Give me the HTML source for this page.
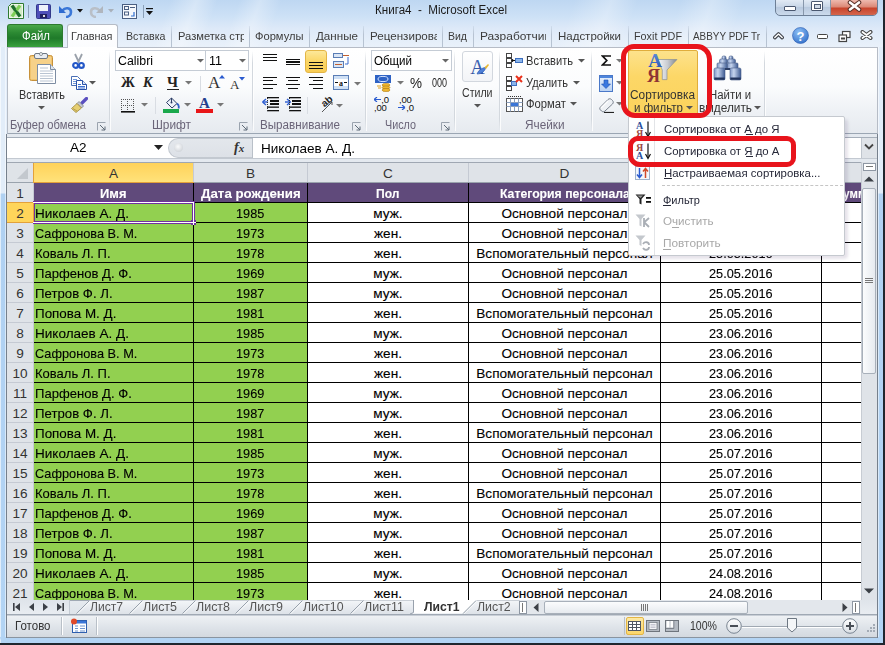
<!DOCTYPE html><html><head><meta charset="utf-8"><style>
*{margin:0;padding:0;box-sizing:border-box}
html,body{width:885px;height:645px;overflow:hidden}
body{position:relative;font-family:"Liberation Sans", sans-serif;background:#c9daee;}
.a{position:absolute}
.t{position:absolute;white-space:nowrap}
.cell{position:absolute;font-size:13.6px;line-height:19px;white-space:nowrap;overflow:hidden;color:#000;-webkit-text-stroke:0.12px currentColor}
</style></head><body>
<div class="a" style="left:0px;top:0px;width:885px;height:47px;background:linear-gradient(180deg,#bed7f2 0%,#cde1f6 35%,#dde9f8 60%,#e9f1fa 100%)"></div><div class="a" style="left:0px;top:0px;width:885px;height:47px;background:linear-gradient(110deg,rgba(255,255,255,0) 0px,rgba(255,255,255,0) 160px,rgba(255,255,255,0.35) 185px,rgba(255,255,255,0) 205px,rgba(255,255,255,0) 225px,rgba(255,255,255,0.3) 245px,rgba(255,255,255,0) 265px,rgba(255,255,255,0) 540px,rgba(255,255,255,0.3) 575px,rgba(255,255,255,0) 600px,rgba(255,255,255,0) 640px,rgba(255,255,255,0.3) 670px,rgba(255,255,255,0) 700px)"></div><div class="a" style="left:0px;top:47px;width:7px;height:598px;background:linear-gradient(180deg,#e2edf9 0px,#e2edf9 146px,#b0d1f2 147px,#b3d4f4 100%)"></div><div class="a" style="left:0px;top:47px;width:1px;height:598px;background:rgba(255,255,255,0.6)"></div><div class="a" style="left:5px;top:47px;width:1px;height:598px;background:rgba(255,255,255,0.5)"></div><div class="a" style="left:877px;top:47px;width:6px;height:598px;background:linear-gradient(180deg,#e2edf9 0px,#e2edf9 146px,#b0d1f2 147px,#b3d4f4 100%)"></div><div class="a" style="left:878px;top:47px;width:1px;height:598px;background:rgba(255,255,255,0.5)"></div><div class="a" style="left:883px;top:0px;width:2px;height:645px;background:#20262e"></div><div class="a" style="left:0px;top:637px;width:883px;height:6px;background:#b3d4f4;border-radius:0 0 6px 6px"></div><div class="a" style="left:0px;top:643px;width:885px;height:2px;background:#20262e"></div><div class="t" style="left:375px;top:0.0px;font-size:12px;line-height:20px;color:#1b1b1b;transform:scaleX(0.967);transform-origin:0 0;">Книга4  -  Microsoft Excel</div><div class="a" style="left:775px;top:-3px;width:103px;height:19px;border:1px solid #6d7f96;border-radius:0 0 5px 5px;overflow:hidden;background:linear-gradient(#e9f0f8,#c9d7e8 50%,#b7c8dd 51%,#cbdaec)"></div><div class="a" style="left:803px;top:0px;width:1px;height:15px;background:#8797ab"></div><div class="a" style="left:830px;top:0px;width:1px;height:15px;background:#8797ab"></div><div class="a" style="left:831px;top:0px;width:46px;height:15px;border-radius:0 0 4px 0;background:linear-gradient(#eeb9ae,#dc8a78 45%,#c8442c 55%,#d4664c)"></div><div class="a" style="left:784px;top:6px;width:12px;height:5px;background:#fff;border:1px solid #4a5870;border-radius:1px"></div><div class="a" style="left:811px;top:1px;width:12px;height:10px;background:#fff;border:1px solid #4a5870;border-radius:1px"></div><div class="a" style="left:813.5px;top:3.5px;width:7px;height:5px;background:#cfd9e6;border:1px solid #4a5870"></div><svg class="a" style="left:847px;top:0px;" width="15" height="12" viewBox="0 0 15 12"><path d="M3 2.5 L12 9.5 M12 2.5 L3 9.5" stroke="#5a3028" stroke-width="4.6" stroke-linecap="round"/><path d="M3 2.5 L12 9.5 M12 2.5 L3 9.5" stroke="#fff" stroke-width="2.6" stroke-linecap="round"/></svg><svg class="a" style="left:8px;top:3px;" width="17" height="17" viewBox="0 0 17 17"><path d="M3.5 0.5 L15.5 0.5 L15.5 15.5 L0.5 15.5 L0.5 3.5 Z" fill="#f2f8ee" stroke="#2f7a32"/><rect x="2" y="2" width="12" height="12" fill="#d3ebc6"/><path d="M4 2.5 L12 13.5" stroke="#1e6f2c" stroke-width="3.2"/><path d="M12 2.5 L4 13.5" stroke="#7fcf57" stroke-width="3"/><path d="M6 6 L10 10.5" stroke="#1e6f2c" stroke-width="2"/></svg><div class="a" style="left:28px;top:5px;width:1px;height:13px;background:#8aa0b8"></div><svg class="a" style="left:36px;top:4px;" width="15" height="15" viewBox="0 0 15 15"><rect x="0.5" y="0.5" width="14" height="14" rx="1" fill="#4e4fb8" stroke="#333a8a"/><rect x="3" y="1" width="9" height="6" fill="#eef2fa"/><rect x="4" y="10" width="7" height="4" fill="#202060"/><rect x="7" y="11" width="2" height="2" fill="#ddd"/></svg><svg class="a" style="left:58px;top:4px;" width="15" height="14" viewBox="0 0 15 14"><path d="M4.5 6.5 C7 3 13 3.5 13 8 C13 11 10.5 13 8 13" fill="none" stroke="#3b78d8" stroke-width="2.6"/><path d="M1 2 L1 9 L8 9 Z" fill="#2f6cd0"/></svg><svg class="a" style="left:77px;top:9px;" width="6" height="4" viewBox="0 0 6 4"><path d="M0 0 L6 0 L3 3.5 Z" fill="#111"/></svg><svg class="a" style="left:89px;top:4px;" width="15" height="14" viewBox="0 0 15 14"><path d="M10.5 6.5 C8 3 2 3.5 2 8 C2 11 4.5 13 7 13" fill="none" stroke="#b9bfc7" stroke-width="2.6"/><path d="M14 2 L14 9 L7 9 Z" fill="#b0b6be"/></svg><svg class="a" style="left:108px;top:9px;" width="6" height="4" viewBox="0 0 6 4"><path d="M0 0 L6 0 L3 3.5 Z" fill="#a8b0ba"/></svg><svg class="a" style="left:122px;top:4px;" width="15" height="15" viewBox="0 0 15 15"><rect x="0.5" y="0.5" width="14" height="14" fill="#f5f8fc" stroke="#4a5f82"/><rect x="2.5" y="2.5" width="4" height="3" fill="none" stroke="#4a5f82"/><rect x="8" y="3" width="5" height="1" fill="#4a5f82"/><rect x="2.5" y="8" width="4" height="3" fill="none" stroke="#4a5f82"/><path d="M9 12 L12 12 L12 8" fill="none" stroke="#2f6fd0" stroke-width="1.2"/></svg><div class="a" style="left:143px;top:5px;width:1px;height:13px;background:#8aa0b8"></div><svg class="a" style="left:146px;top:8px;" width="8" height="8" viewBox="0 0 8 8"><rect x="0" y="0" width="7" height="1.2" fill="#111"/><path d="M0 3 L7 3 L3.5 7 Z" fill="#111"/></svg><div class="a" style="left:7px;top:24px;width:56px;height:23px;border-radius:3px 3px 0 0;background:linear-gradient(#4aa84a 0%,#2c8a33 35%,#1f7a2a 60%,#3aa23e 100%);border:1px solid #2d7a2f;border-bottom:none"></div><div class="t" style="left:22px;top:26.0px;font-size:12px;line-height:20px;color:#fff;transform:scaleX(0.949);transform-origin:0 0;">Файл</div><div class="a" style="left:67px;top:24px;width:51px;height:24px;border-radius:3px 3px 0 0;background:linear-gradient(#fff,#fbfcfe);border:1px solid #b6bcc6;border-bottom:none"></div><div class="t" style="left:71px;top:26.0px;font-size:11px;line-height:20px;color:#3c3c3c;transform:scaleX(0.991);transform-origin:0 0;">Главная</div><div class="t" style="left:125.5px;top:26.0px;font-size:11px;line-height:20px;color:#3c3c3c;transform:scaleX(0.966);transform-origin:0 0;">Вставка</div><div class="a" style="left:178px;top:24px;width:66px;height:22px;overflow:hidden"><div class="t" style="left:0px;top:2px;font-size:11px;line-height:20px;color:#3c3c3c;transform:scaleX(1.014);transform-origin:0 0;">Разметка стр</div></div><div class="t" style="left:255px;top:26.0px;font-size:11px;line-height:20px;color:#3c3c3c;transform:scaleX(1.013);transform-origin:0 0;">Формулы</div><div class="t" style="left:316px;top:26.0px;font-size:11px;line-height:20px;color:#3c3c3c;transform:scaleX(1.057);transform-origin:0 0;">Данные</div><div class="a" style="left:370px;top:24px;width:67px;height:22px;overflow:hidden"><div class="t" style="left:0px;top:2px;font-size:11px;line-height:20px;color:#3c3c3c;transform:scaleX(1.056);transform-origin:0 0;">Рецензирова</div></div><div class="t" style="left:448px;top:26.0px;font-size:11px;line-height:20px;color:#3c3c3c;transform:scaleX(0.955);transform-origin:0 0;">Вид</div><div class="a" style="left:480px;top:24px;width:66px;height:22px;overflow:hidden"><div class="t" style="left:0px;top:2px;font-size:11px;line-height:20px;color:#3c3c3c;transform:scaleX(1.087);transform-origin:0 0;">Разработчик</div></div><div class="t" style="left:558px;top:26.0px;font-size:11px;line-height:20px;color:#3c3c3c;transform:scaleX(1.044);transform-origin:0 0;">Надстройки</div><div class="t" style="left:634px;top:26.0px;font-size:11px;line-height:20px;color:#3c3c3c;transform:scaleX(0.982);transform-origin:0 0;">Foxit PDF</div><div class="t" style="left:693px;top:26.0px;font-size:11px;line-height:20px;color:#3c3c3c;transform:scaleX(0.901);transform-origin:0 0;">ABBYY PDF Tr</div><div class="a" style="left:171px;top:26px;width:1px;height:21px;background:linear-gradient(rgba(160,175,195,0.2),#b7c3d2 40%,#b7c3d2)"></div><div class="a" style="left:249px;top:26px;width:1px;height:21px;background:linear-gradient(rgba(160,175,195,0.2),#b7c3d2 40%,#b7c3d2)"></div><div class="a" style="left:309px;top:26px;width:1px;height:21px;background:linear-gradient(rgba(160,175,195,0.2),#b7c3d2 40%,#b7c3d2)"></div><div class="a" style="left:363px;top:26px;width:1px;height:21px;background:linear-gradient(rgba(160,175,195,0.2),#b7c3d2 40%,#b7c3d2)"></div><div class="a" style="left:442px;top:26px;width:1px;height:21px;background:linear-gradient(rgba(160,175,195,0.2),#b7c3d2 40%,#b7c3d2)"></div><div class="a" style="left:473px;top:26px;width:1px;height:21px;background:linear-gradient(rgba(160,175,195,0.2),#b7c3d2 40%,#b7c3d2)"></div><div class="a" style="left:551px;top:26px;width:1px;height:21px;background:linear-gradient(rgba(160,175,195,0.2),#b7c3d2 40%,#b7c3d2)"></div><div class="a" style="left:628px;top:26px;width:1px;height:21px;background:linear-gradient(rgba(160,175,195,0.2),#b7c3d2 40%,#b7c3d2)"></div><div class="a" style="left:688px;top:26px;width:1px;height:21px;background:linear-gradient(rgba(160,175,195,0.2),#b7c3d2 40%,#b7c3d2)"></div><div class="a" style="left:766px;top:26px;width:1px;height:21px;background:linear-gradient(rgba(160,175,195,0.2),#b7c3d2 40%,#b7c3d2)"></div><svg class="a" style="left:773px;top:31px;" width="11" height="9" viewBox="0 0 11 9"><path d="M1.8 6.6 L5.5 3 L9.2 6.6" fill="none" stroke="#3f434a" stroke-width="3.6" stroke-linecap="round" stroke-linejoin="round"/><path d="M1.8 6.6 L5.5 3 L9.2 6.6" fill="none" stroke="#fff" stroke-width="1.4" stroke-linecap="round" stroke-linejoin="round"/></svg><svg class="a" style="left:792px;top:27px;" width="17" height="17" viewBox="0 0 17 17"><defs><radialGradient id="hg" cx="0.4" cy="0.3" r="0.8"><stop offset="0" stop-color="#8ec0f5"/><stop offset="1" stop-color="#2f6cc8"/></radialGradient></defs><circle cx="8.5" cy="8.5" r="8" fill="url(#hg)" stroke="#2a5cb0" stroke-width="0.6"/><text x="8.5" y="13.5" font-family="Liberation Sans" font-weight="bold" font-size="13" fill="#fff" text-anchor="middle">?</text></svg><div class="a" style="left:817px;top:34px;width:11px;height:5px;background:#fff;border:1.2px solid #444;border-radius:1.5px"></div><svg class="a" style="left:838px;top:30px;" width="13" height="13" viewBox="0 0 13 13"><rect x="4.5" y="1.5" width="7.5" height="6" fill="#fff" stroke="#444" stroke-width="1.2"/><rect x="1" y="5" width="7.5" height="6.5" fill="#fff" stroke="#444" stroke-width="1.2"/><rect x="3" y="7.5" width="4" height="2" fill="#444"/></svg><svg class="a" style="left:860px;top:30px;" width="13" height="10" viewBox="0 0 13 10"><path d="M2.5 2 L10.5 8 M10.5 2 L2.5 8" stroke="#444" stroke-width="4" stroke-linecap="round"/><path d="M2.5 2 L10.5 8 M10.5 2 L2.5 8" stroke="#fff" stroke-width="1.8" stroke-linecap="round"/></svg><div class="a" style="left:7px;top:47px;width:871px;height:87px;border:1px solid #b6bcc6;border-bottom:1px solid #9ba6b3;background:linear-gradient(#ffffff 0%,#fbfcfd 45%,#eef1f5 75%,#e6eaef 100%)"></div><div class="a" style="left:68px;top:47px;width:49px;height:1px;background:#fff"></div><div class="a" style="left:109px;top:51px;width:1px;height:80px;background:linear-gradient(rgba(200,206,214,0),#d3d8de 15%,#d3d8de 85%,rgba(200,206,214,0))"></div><div class="a" style="left:110px;top:51px;width:1px;height:80px;background:rgba(255,255,255,0.8)"></div><div class="a" style="left:252px;top:51px;width:1px;height:80px;background:linear-gradient(rgba(200,206,214,0),#d3d8de 15%,#d3d8de 85%,rgba(200,206,214,0))"></div><div class="a" style="left:253px;top:51px;width:1px;height:80px;background:rgba(255,255,255,0.8)"></div><div class="a" style="left:365px;top:51px;width:1px;height:80px;background:linear-gradient(rgba(200,206,214,0),#d3d8de 15%,#d3d8de 85%,rgba(200,206,214,0))"></div><div class="a" style="left:366px;top:51px;width:1px;height:80px;background:rgba(255,255,255,0.8)"></div><div class="a" style="left:454px;top:51px;width:1px;height:80px;background:linear-gradient(rgba(200,206,214,0),#d3d8de 15%,#d3d8de 85%,rgba(200,206,214,0))"></div><div class="a" style="left:455px;top:51px;width:1px;height:80px;background:rgba(255,255,255,0.8)"></div><div class="a" style="left:499px;top:51px;width:1px;height:80px;background:linear-gradient(rgba(200,206,214,0),#d3d8de 15%,#d3d8de 85%,rgba(200,206,214,0))"></div><div class="a" style="left:500px;top:51px;width:1px;height:80px;background:rgba(255,255,255,0.8)"></div><div class="a" style="left:591px;top:51px;width:1px;height:80px;background:linear-gradient(rgba(200,206,214,0),#d3d8de 15%,#d3d8de 85%,rgba(200,206,214,0))"></div><div class="a" style="left:592px;top:51px;width:1px;height:80px;background:rgba(255,255,255,0.8)"></div><div class="a" style="left:764px;top:51px;width:1px;height:80px;background:linear-gradient(rgba(200,206,214,0),#d3d8de 15%,#d3d8de 85%,rgba(200,206,214,0))"></div><div class="a" style="left:765px;top:51px;width:1px;height:80px;background:rgba(255,255,255,0.8)"></div><div class="t" style="left:10.3px;top:115.0px;font-size:12px;line-height:20px;color:#6a6478;transform:scaleX(0.932);transform-origin:0 0;">Буфер обмена</div><div class="t" style="left:152px;top:115.0px;font-size:12px;line-height:20px;color:#6a6478;transform:scaleX(0.988);transform-origin:0 0;">Шрифт</div><div class="t" style="left:260px;top:115.0px;font-size:12px;line-height:20px;color:#6a6478;transform:scaleX(0.969);transform-origin:0 0;">Выравнивание</div><div class="t" style="left:385px;top:115.0px;font-size:12px;line-height:20px;color:#6a6478;transform:scaleX(0.898);transform-origin:0 0;">Число</div><div class="t" style="left:525px;top:115.0px;font-size:12px;line-height:20px;color:#6a6478;transform:scaleX(0.981);transform-origin:0 0;">Ячейки</div><svg class="a" style="left:97px;top:122px;" width="9" height="9" viewBox="0 0 9 9"><path d="M0.5 0.5 L8.5 0.5 M0.5 0.5 L0.5 8.5" stroke="#9aa3ae"/><path d="M3 3 L8 8 M8 4.5 L8 8 L4.5 8" stroke="#5f6b78" fill="none"/></svg><svg class="a" style="left:239px;top:122px;" width="9" height="9" viewBox="0 0 9 9"><path d="M0.5 0.5 L8.5 0.5 M0.5 0.5 L0.5 8.5" stroke="#9aa3ae"/><path d="M3 3 L8 8 M8 4.5 L8 8 L4.5 8" stroke="#5f6b78" fill="none"/></svg><svg class="a" style="left:352px;top:122px;" width="9" height="9" viewBox="0 0 9 9"><path d="M0.5 0.5 L8.5 0.5 M0.5 0.5 L0.5 8.5" stroke="#9aa3ae"/><path d="M3 3 L8 8 M8 4.5 L8 8 L4.5 8" stroke="#5f6b78" fill="none"/></svg><svg class="a" style="left:441px;top:122px;" width="9" height="9" viewBox="0 0 9 9"><path d="M0.5 0.5 L8.5 0.5 M0.5 0.5 L0.5 8.5" stroke="#9aa3ae"/><path d="M3 3 L8 8 M8 4.5 L8 8 L4.5 8" stroke="#5f6b78" fill="none"/></svg><div class="a" style="left:7px;top:134px;width:871px;height:28px;background:#e4e9ef"></div><div class="a" style="left:7px;top:137px;width:871px;height:22px;background:#fff;border-top:1px solid #a5aeb9;border-bottom:1px solid #c3c9d1"></div><div class="a" style="left:168px;top:138px;width:85px;height:20px;border-radius:10px 0 0 10px;border:1px solid #c3c9d0;border-right:none;background:linear-gradient(#e3e7ec,#dde1e7)"></div><div class="a" style="left:173.5px;top:143px;width:9px;height:9px;border-radius:5px;background:radial-gradient(circle at 45% 40%,#fafbfc,#c3c8cf)"></div><div class="a" style="left:252px;top:138px;width:1px;height:20px;background:#b9c0c8"></div><div class="a" style="left:861px;top:138px;width:16px;height:20px;background:#dfe3e8;border-left:1px solid #c0c6ce"></div><svg class="a" style="left:864px;top:143px;" width="10" height="8" viewBox="0 0 10 8"><path d="M1 1.5 L5 5.5 L9 1.5" fill="none" stroke="#444" stroke-width="1.8"/></svg><div class="t" style="left:70px;top:138.0px;font-size:13.6px;line-height:20px;color:#000;transform:scaleX(0.992);transform-origin:0 0;">A2</div><svg class="a" style="left:154px;top:145px;" width="9" height="6" viewBox="0 0 9 6"><path d="M0 0 L9 0 L4.5 5 Z" fill="#222"/></svg><div class="t" style="left:234px;top:138px;font-family:'Liberation Serif',serif;font-style:italic;font-weight:bold;font-size:14px;line-height:20px;color:#333">f<span style="font-size:11px">x</span></div><div class="t" style="left:261px;top:138.7px;font-size:13.6px;line-height:20px;color:#000;transform:scaleX(0.995);transform-origin:0 0;">Николаев А. Д.</div><svg class="a" style="left:28px;top:52px;" width="29" height="33" viewBox="0 0 29 33"><rect x="1.5" y="3.5" width="23" height="25" rx="2" fill="#f0c36e" stroke="#c7913a"/><rect x="3" y="5" width="20" height="22" fill="#f6d189"/><rect x="6.5" y="1.5" width="13" height="5" rx="1.5" fill="#e9edf2" stroke="#6f7884"/><circle cx="13" cy="2" r="1.5" fill="#fff" stroke="#6f7884" stroke-width="0.8"/><path d="M9.5 12.5 L22.5 12.5 L27.5 17.5 L27.5 31.5 L9.5 31.5 Z" fill="#fff" stroke="#7d8da3"/><path d="M22.5 12.5 L22.5 17.5 L27.5 17.5" fill="#dde4ec" stroke="#7d8da3"/><path d="M12 16h8M12 19h13M12 21.5h13M12 24h13M12 26.5h13M12 29h13" stroke="#b9c4d2" stroke-width="1"/></svg><div class="t" style="left:18.7px;top:85.0px;font-size:12px;line-height:20px;color:#333;transform:scaleX(0.904);transform-origin:0 0;">Вставить</div><svg class="a" style="left:38px;top:106px;" width="7" height="4" viewBox="0 0 7 4"><path d="M0 0 L7 0 L3.5 3.5 Z" fill="#555"/></svg><svg class="a" style="left:72px;top:53px;" width="13" height="16" viewBox="0 0 13 16"><path d="M3 1 L7 9.5 M10 1 L6 9.5" stroke="#9aa1aa" stroke-width="1.8"/><circle cx="3.6" cy="12.4" r="2.4" fill="#fff" stroke="#2458c8" stroke-width="2.2"/><circle cx="9.4" cy="12.4" r="2.4" fill="#fff" stroke="#2458c8" stroke-width="2.2"/></svg><svg class="a" style="left:70px;top:75px;" width="18" height="16" viewBox="0 0 18 16"><path d="M1.5 1.5 L7.5 1.5 L10.5 4.5 L10.5 10.5 L1.5 10.5 Z" fill="#fff" stroke="#4a6fb5"/><path d="M3 4.5h4M3 6.5h6M3 8.5h6" stroke="#6d95d8"/><path d="M6.5 5.5 L12.5 5.5 L16.5 9.5 L16.5 14.5 L6.5 14.5 Z" fill="#fff" stroke="#2a52a8"/><path d="M12.5 5.5 L12.5 9.5 L16.5 9.5" fill="#dbe6f6" stroke="#2a52a8"/><path d="M8 9.5h3M8 11.5h7M8 13h7" stroke="#3c6fd0"/></svg><svg class="a" style="left:89px;top:81px;" width="7" height="4" viewBox="0 0 7 4"><path d="M0 0 L7 0 L3.5 3.5 Z" fill="#555"/></svg><svg class="a" style="left:70px;top:97px;" width="18" height="16" viewBox="0 0 18 16"><path d="M12 6 L16.5 1.5" stroke="#5a4fc0" stroke-width="3.2" stroke-linecap="round"/><path d="M9 4.5 L13.5 9 L11.5 11 L7 6.5 Z" fill="#c3c7cf" stroke="#7d838c" stroke-width="0.8"/><path d="M7 6.5 L11.5 11 L6 15.5 L1.5 11.5 Z" fill="#e6cf73" stroke="#9d8635" stroke-width="0.8"/><path d="M3 11.5 L7 14" stroke="#b9a047"/></svg><div class="a" style="left:115px;top:50px;width:91px;height:21px;border:1px solid #c5ccd5;background:#fff"></div><div class="a" style="left:205px;top:50px;width:44px;height:21px;border:1px solid #c5ccd5;background:#fff"></div><div class="t" style="left:118px;top:51.0px;font-size:12px;line-height:20px;color:#000;transform:scaleX(1.029);transform-origin:0 0;">Calibri</div><svg class="a" style="left:197px;top:59px;" width="7" height="4" viewBox="0 0 7 4"><path d="M0 0 L7 0 L3.5 3.5 Z" fill="#666"/></svg><div class="t" style="left:208.5px;top:51.0px;font-size:12px;line-height:20px;color:#000;transform:scaleX(1.044);transform-origin:0 0;">11</div><svg class="a" style="left:239px;top:59px;" width="7" height="4" viewBox="0 0 7 4"><path d="M0 0 L7 0 L3.5 3.5 Z" fill="#666"/></svg><div class="t" style="left:121px;top:73px;font-family:'Liberation Serif',serif;font-weight:bold;font-size:14px;line-height:20px;color:#222">Ж</div><div class="t" style="left:143px;top:73px;font-family:'Liberation Serif',serif;font-weight:bold;font-style:italic;font-size:14px;line-height:20px;color:#222">К</div><div class="t" style="left:167px;top:72px;font-family:'Liberation Serif',serif;font-weight:bold;font-size:15px;line-height:20px;color:#222">Ч</div><div class="a" style="left:167px;top:89px;width:12px;height:1px;background:#222"></div><svg class="a" style="left:185px;top:81px;" width="7" height="4" viewBox="0 0 7 4"><path d="M0 0 L7 0 L3.5 3.5 Z" fill="#777"/></svg><div class="a" style="left:200px;top:76px;width:1px;height:16px;background:#d9dde3"></div><div class="t" style="left:208px;top:73px;font-family:'Liberation Serif',serif;font-size:17px;line-height:20px;color:#333">A</div><svg class="a" style="left:219px;top:75px;" width="6" height="4" viewBox="0 0 6 4"><path d="M0 3.5 L3 0 L6 3.5 Z" fill="#2a5bd0"/></svg><div class="t" style="left:230px;top:76px;font-family:'Liberation Serif',serif;font-size:13px;line-height:18px;color:#333">A</div><svg class="a" style="left:239px;top:77px;" width="6" height="4" viewBox="0 0 6 4"><path d="M0 0 L6 0 L3 3.5 Z" fill="#2a5bd0"/></svg><svg class="a" style="left:121px;top:99px;" width="14" height="14" viewBox="0 0 14 14"><g fill="#555"><rect x="0" y="0" width="1" height="1"/><rect x="2" y="0" width="1" height="1"/><rect x="4" y="0" width="1" height="1"/><rect x="6" y="0" width="1" height="1"/><rect x="8" y="0" width="1" height="1"/><rect x="10" y="0" width="1" height="1"/><rect x="12" y="0" width="1" height="1"/><rect x="0" y="6" width="1" height="1"/><rect x="2" y="6" width="1" height="1"/><rect x="4" y="6" width="1" height="1"/><rect x="6" y="6" width="1" height="1"/><rect x="8" y="6" width="1" height="1"/><rect x="10" y="6" width="1" height="1"/><rect x="12" y="6" width="1" height="1"/><rect x="0" y="12" width="1" height="1"/><rect x="2" y="12" width="1" height="1"/><rect x="4" y="12" width="1" height="1"/><rect x="6" y="12" width="1" height="1"/><rect x="8" y="12" width="1" height="1"/><rect x="10" y="12" width="1" height="1"/><rect x="12" y="12" width="1" height="1"/><rect x="0" y="0" width="1" height="1"/><rect x="0" y="2" width="1" height="1"/><rect x="0" y="4" width="1" height="1"/><rect x="0" y="6" width="1" height="1"/><rect x="0" y="8" width="1" height="1"/><rect x="0" y="10" width="1" height="1"/><rect x="6" y="0" width="1" height="1"/><rect x="6" y="2" width="1" height="1"/><rect x="6" y="4" width="1" height="1"/><rect x="6" y="6" width="1" height="1"/><rect x="6" y="8" width="1" height="1"/><rect x="6" y="10" width="1" height="1"/><rect x="12" y="0" width="1" height="1"/><rect x="12" y="2" width="1" height="1"/><rect x="12" y="4" width="1" height="1"/><rect x="12" y="6" width="1" height="1"/><rect x="12" y="8" width="1" height="1"/><rect x="12" y="10" width="1" height="1"/></g><rect x="0" y="12" width="14" height="1.6" fill="#111"/></svg><svg class="a" style="left:141px;top:103px;" width="7" height="4" viewBox="0 0 7 4"><path d="M0 0 L7 0 L3.5 3.5 Z" fill="#777"/></svg><div class="a" style="left:155px;top:97px;width:1px;height:17px;background:#d9dde3"></div><svg class="a" style="left:163px;top:96px;" width="17" height="17" viewBox="0 0 17 17"><path d="M3.5 6.5 L8.5 2 L14 7.5 L9 12 Z" fill="#eef3fb" stroke="#2d3e66" stroke-width="1"/><path d="M8.5 2 L8.5 6" stroke="#2d3e66"/><circle cx="8.5" cy="6.5" r="1" fill="#2d3e66"/><path d="M14 7.5 C16 9 16 11 15.5 12.5" stroke="#2f62c8" stroke-width="1.8" fill="none"/><rect x="0" y="13" width="16" height="4" fill="#1aa84c"/></svg><svg class="a" style="left:184px;top:103px;" width="7" height="4" viewBox="0 0 7 4"><path d="M0 0 L7 0 L3.5 3.5 Z" fill="#777"/></svg><svg class="a" style="left:196px;top:96px;" width="17" height="13" viewBox="0 0 17 13"><text x="8.5" y="11.5" font-family="Liberation Serif" font-weight="bold" font-size="15" fill="#24408e" text-anchor="middle">A</text></svg><div class="a" style="left:196px;top:109px;width:17px;height:4px;background:#e81518"></div><svg class="a" style="left:217px;top:103px;" width="7" height="4" viewBox="0 0 7 4"><path d="M0 0 L7 0 L3.5 3.5 Z" fill="#777"/></svg><div class="a" style="left:305px;top:50px;width:22px;height:23px;border:1px solid #e3b545;border-radius:3px;background:linear-gradient(#fde89a,#fbd665 50%,#f8cc54)"></div><div class="a" style="left:263px;top:54.0px;width:14px;height:1.3px;background:#111"></div><div class="a" style="left:263px;top:56.8px;width:14px;height:1.3px;background:#111"></div><div class="a" style="left:263px;top:59.6px;width:14px;height:1.3px;background:#111"></div><div class="a" style="left:286px;top:58.5px;width:14px;height:1.3px;background:#111"></div><div class="a" style="left:286px;top:61.3px;width:14px;height:1.3px;background:#111"></div><div class="a" style="left:286px;top:64.1px;width:14px;height:1.3px;background:#111"></div><div class="a" style="left:309px;top:62.0px;width:14px;height:1.3px;background:#111"></div><div class="a" style="left:309px;top:64.8px;width:14px;height:1.3px;background:#111"></div><div class="a" style="left:309px;top:67.6px;width:14px;height:1.3px;background:#111"></div><svg class="a" style="left:333px;top:53px;" width="17" height="16" viewBox="0 0 17 16"><rect x="0.5" y="0.5" width="9" height="4" fill="#dbe6f5" stroke="#5a7db5"/><path d="M10 2.5h6" stroke="#c06030"/><rect x="0.5" y="8.5" width="10" height="6" fill="#dbe6f5" stroke="#5a7db5"/><path d="M2 11.5h7" stroke="#c06030"/><path d="M15 4 L15 11 L12 11" stroke="#3a6cd0" fill="none"/></svg><div class="a" style="left:263px;top:76.5px;width:14px;height:1.3px;background:#111"></div><div class="a" style="left:263px;top:80.2px;width:10px;height:1.3px;background:#111"></div><div class="a" style="left:263px;top:83.9px;width:14px;height:1.3px;background:#111"></div><div class="a" style="left:263px;top:87.6px;width:10px;height:1.3px;background:#111"></div><div class="a" style="left:286.0px;top:76.5px;width:14px;height:1.3px;background:#111"></div><div class="a" style="left:288.0px;top:80.2px;width:10px;height:1.3px;background:#111"></div><div class="a" style="left:286.0px;top:83.9px;width:14px;height:1.3px;background:#111"></div><div class="a" style="left:288.0px;top:87.6px;width:10px;height:1.3px;background:#111"></div><div class="a" style="left:309px;top:76.5px;width:14px;height:1.3px;background:#111"></div><div class="a" style="left:313px;top:80.2px;width:10px;height:1.3px;background:#111"></div><div class="a" style="left:309px;top:83.9px;width:14px;height:1.3px;background:#111"></div><div class="a" style="left:313px;top:87.6px;width:10px;height:1.3px;background:#111"></div><svg class="a" style="left:333px;top:75px;" width="16" height="15" viewBox="0 0 16 15"><rect x="0.5" y="0.5" width="15" height="14" fill="#cfe0f5" stroke="#5a7db5"/><rect x="1" y="4" width="14" height="7" fill="#fff"/><text x="8" y="10.5" font-family="Liberation Serif" font-size="8" font-weight="bold" text-anchor="middle" fill="#111">a</text><path d="M2 7.5h3M11 7.5h3" stroke="#111"/></svg><svg class="a" style="left:354px;top:82px;" width="7" height="4" viewBox="0 0 7 4"><path d="M0 0 L7 0 L3.5 3.5 Z" fill="#777"/></svg><svg class="a" style="left:262px;top:97px;" width="17" height="16" viewBox="0 0 17 16"><path d="M0.5 5 L4 2 M0.5 5 L4 8" stroke="#2a5bd0" stroke-width="1.4" fill="none"/><path d="M1 5h5" stroke="#2a5bd0" stroke-width="1.4"/><rect x="5" y="0" width="12" height="1.3" fill="#111"/><rect x="8" y="3" width="9" height="2" fill="#111"/><rect x="8" y="6" width="9" height="2" fill="#111"/><rect x="5" y="9.5" width="12" height="1.3" fill="#111"/><rect x="5" y="13" width="12" height="1.3" fill="#111"/><path d="M5.5 1v14" stroke="#333" stroke-dasharray="1 1"/></svg><svg class="a" style="left:284px;top:97px;" width="17" height="16" viewBox="0 0 17 16"><path d="M6.5 5 L3 2 M6.5 5 L3 8" stroke="#2a5bd0" stroke-width="1.4" fill="none"/><path d="M1 5h5" stroke="#2a5bd0" stroke-width="1.4"/><rect x="5" y="0" width="12" height="1.3" fill="#111"/><rect x="8" y="3" width="9" height="2" fill="#111"/><rect x="8" y="6" width="9" height="2" fill="#111"/><rect x="5" y="9.5" width="12" height="1.3" fill="#111"/><rect x="5" y="13" width="12" height="1.3" fill="#111"/><path d="M5.5 1v14" stroke="#333" stroke-dasharray="1 1"/></svg><div class="a" style="left:307px;top:97px;width:1px;height:17px;background:#d9dde3"></div><svg class="a" style="left:316px;top:96px;" width="18" height="17" viewBox="0 0 18 17"><text x="6" y="11" transform="rotate(-40 8 8)" font-family="Liberation Sans" font-size="10" font-weight="bold" fill="#222">ab</text><path d="M6 16 L16 6" stroke="#555"/><path d="M13 6h3v3" stroke="#555" fill="none"/></svg><svg class="a" style="left:336px;top:104px;" width="7" height="4" viewBox="0 0 7 4"><path d="M0 0 L7 0 L3.5 3.5 Z" fill="#777"/></svg><div class="a" style="left:371px;top:50px;width:81px;height:21px;border:1px solid #c5ccd5;background:#fff"></div><div class="t" style="left:374px;top:51.0px;font-size:12px;line-height:20px;color:#000;transform:scaleX(0.962);transform-origin:0 0;">Общий</div><svg class="a" style="left:442px;top:59px;" width="7" height="4" viewBox="0 0 7 4"><path d="M0 0 L7 0 L3.5 3.5 Z" fill="#666"/></svg><svg class="a" style="left:375px;top:75px;" width="17" height="17" viewBox="0 0 17 17"><rect x="0" y="0" width="16" height="8" fill="#2e62c4"/><ellipse cx="8" cy="4" rx="5" ry="2.6" fill="none" stroke="#cfe0ff"/><ellipse cx="11" cy="10" rx="4" ry="1.6" fill="#f0b830" stroke="#b07a10" stroke-width="0.6"/><ellipse cx="11" cy="12.5" rx="4" ry="1.6" fill="#f0b830" stroke="#b07a10" stroke-width="0.6"/><ellipse cx="11" cy="15" rx="4" ry="1.6" fill="#f0b830" stroke="#b07a10" stroke-width="0.6"/><path d="M2 11h4M3 13h3" stroke="#e0a020" stroke-width="1.2"/></svg><svg class="a" style="left:397px;top:81px;" width="7" height="4" viewBox="0 0 7 4"><path d="M0 0 L7 0 L3.5 3.5 Z" fill="#777"/></svg><div class="t" style="left:410px;top:73.0px;font-size:14px;line-height:20px;color:#222;transform:scaleX(0.964);transform-origin:0 0;">%</div><div class="t" style="left:432px;top:73.0px;font-size:12px;line-height:20px;color:#222;transform:scaleX(0.749);transform-origin:0 0;">000</div><div class="t" style="left:374px;top:96px;font-size:9.5px;line-height:8px;color:#111;letter-spacing:-0.2px">&nbsp;&nbsp;&nbsp;,0<br>,00</div><svg class="a" style="left:374px;top:97px;" width="8" height="5" viewBox="0 0 8 5"><path d="M0 2.5 L7 2.5 M0 2.5 L3 0 M0 2.5 L3 5" stroke="#2a5bd0" stroke-width="1.2" fill="none"/></svg><div class="t" style="left:399px;top:96px;font-size:9.5px;line-height:8px;color:#111;letter-spacing:-0.2px">,00<br>&nbsp;&nbsp;&nbsp;,0</div><svg class="a" style="left:398px;top:105px;" width="8" height="5" viewBox="0 0 8 5"><path d="M0 2.5 L7 2.5 M7 2.5 L4 0 M7 2.5 L4 5" stroke="#2a5bd0" stroke-width="1.2" fill="none"/></svg><div class="a" style="left:462px;top:51px;width:31px;height:31px;border:1px solid #d2d7de;border-radius:3px;background:linear-gradient(#fff,#f2f4f7)"></div><svg class="a" style="left:462px;top:52px;" width="31" height="30" viewBox="0 0 31 30"><defs><linearGradient id="sg" x1="0" y1="0" x2="0" y2="1"><stop offset="0" stop-color="#4a70c0"/><stop offset="1" stop-color="#2a4a9a"/></linearGradient></defs><text x="15.5" y="21.5" font-family="Liberation Serif" font-size="20" fill="url(#sg)" text-anchor="middle">A</text><path d="M15 22 C17 17 21 16 24 15 C23 19 20 22 15 22 Z" fill="#4d7fd8" stroke="#2a52a8" stroke-width="0.6"/><path d="M22.5 15.5 L26 12 L27 13 L24 17 Z" fill="#e8b830"/></svg><div class="t" style="left:462px;top:83.0px;font-size:12px;line-height:20px;color:#333;transform:scaleX(0.882);transform-origin:0 0;">Стили</div><svg class="a" style="left:474px;top:104px;" width="7" height="4" viewBox="0 0 7 4"><path d="M0 0 L7 0 L3.5 3.5 Z" fill="#555"/></svg><svg class="a" style="left:506px;top:53px;" width="17" height="16" viewBox="0 0 17 16"><rect x="0.5" y="0.5" width="5" height="4" fill="#fff" stroke="#444"/><rect x="0.5" y="5.5" width="5" height="4" fill="#fff" stroke="#444"/><rect x="0.5" y="10.5" width="5" height="4" fill="#fff" stroke="#444"/><rect x="9.5" y="5.5" width="7" height="4" fill="#8bb5ea" stroke="#3d6fc0"/><path d="M6 7.5 L9 7.5 M7 6 L6 7.5 L7 9" stroke="#111"/></svg><div class="t" style="left:526px;top:51.0px;font-size:12px;line-height:20px;color:#333;transform:scaleX(0.924);transform-origin:0 0;">Вставить</div><svg class="a" style="left:578px;top:59px;" width="7" height="4" viewBox="0 0 7 4"><path d="M0 0 L7 0 L3.5 3.5 Z" fill="#555"/></svg><svg class="a" style="left:506px;top:75px;" width="17" height="16" viewBox="0 0 17 16"><rect x="0.5" y="1.5" width="5" height="4" fill="#fff" stroke="#444"/><rect x="0.5" y="6.5" width="5" height="4" fill="#fff" stroke="#444"/><rect x="0.5" y="11.5" width="5" height="4" fill="#fff" stroke="#444"/><rect x="5.5" y="6.5" width="5" height="4" fill="#8bb5ea" stroke="#3d6fc0"/><path d="M10 1 L16 7 M16 1 L10 7" stroke="#e8301a" stroke-width="2"/></svg><div class="t" style="left:526px;top:73.0px;font-size:12px;line-height:20px;color:#333;transform:scaleX(0.917);transform-origin:0 0;">Удалить</div><svg class="a" style="left:573px;top:81px;" width="7" height="4" viewBox="0 0 7 4"><path d="M0 0 L7 0 L3.5 3.5 Z" fill="#555"/></svg><svg class="a" style="left:506px;top:96px;" width="18" height="16" viewBox="0 0 18 16"><rect x="0.5" y="2.5" width="16" height="13" fill="#fff" stroke="#555"/><path d="M0.5 6.5h16M0.5 10.5h16M4.5 2.5v13M8.5 2.5v13M12.5 2.5v13" stroke="#8aa0c0"/><rect x="5" y="7" width="7" height="3" fill="#3a76d8"/><path d="M2 0.5h13" stroke="#333" stroke-dasharray="1 1"/></svg><div class="t" style="left:526px;top:94.0px;font-size:12px;line-height:20px;color:#333;transform:scaleX(0.938);transform-origin:0 0;">Формат</div><svg class="a" style="left:570px;top:102px;" width="7" height="4" viewBox="0 0 7 4"><path d="M0 0 L7 0 L3.5 3.5 Z" fill="#555"/></svg><svg class="a" style="left:601px;top:55px;" width="11" height="11" viewBox="0 0 11 11"><path d="M10 1 L1.5 1 L5.8 5.5 L1.5 10 L10 10" fill="none" stroke="#111" stroke-width="1.7" stroke-linejoin="miter"/></svg><svg class="a" style="left:616px;top:59px;" width="7" height="4" viewBox="0 0 7 4"><path d="M0 0 L7 0 L3.5 3.5 Z" fill="#777"/></svg><svg class="a" style="left:599px;top:75px;" width="15" height="17" viewBox="0 0 15 17"><defs><linearGradient id="fl" x1="0" y1="0" x2="0" y2="1"><stop offset="0" stop-color="#e9f1fc"/><stop offset="1" stop-color="#b9d1f2"/></linearGradient></defs><rect x="0.5" y="0.5" width="13" height="16" fill="url(#fl)" stroke="#4a78c8"/><rect x="1" y="1" width="12" height="2" fill="#4f86dc"/><path d="M5 5 H9 V9 H11.5 L7 13.5 L2.5 9 H5 Z" fill="#3a78e0" stroke="#2050b0" stroke-width="0.6"/></svg><svg class="a" style="left:616px;top:81px;" width="7" height="4" viewBox="0 0 7 4"><path d="M0 0 L7 0 L3.5 3.5 Z" fill="#777"/></svg><svg class="a" style="left:599px;top:97px;" width="16" height="16" viewBox="0 0 16 16"><path d="M1.5 10 L9 2.5 C10 1.5 11.5 1.5 12.5 2.5 L13.5 3.5 C14.5 4.5 14.5 6 13.5 7 L6 14 C5 15 3.5 15 2.5 14 L1.5 13 C0.5 12 0.5 11 1.5 10 Z" fill="#eef1f5" stroke="#6a7380" stroke-width="0.9"/><path d="M2 11 L9 4" stroke="#fff" stroke-width="1.2"/><path d="M5 15.5h10" stroke="#222" stroke-width="1.2"/></svg><svg class="a" style="left:616px;top:102px;" width="7" height="4" viewBox="0 0 7 4"><path d="M0 0 L7 0 L3.5 3.5 Z" fill="#777"/></svg><div class="a" style="left:628px;top:50px;width:70px;height:66px;border:1px solid #e0ad3c;border-radius:2px;background:linear-gradient(#fde28c,#fcd767 40%,#fbd35c 100%)"></div><svg class="a" style="left:640px;top:50px;" width="45" height="35" viewBox="0 0 45 35"><defs><linearGradient id="fg" x1="0" y1="0" x2="1" y2="0"><stop offset="0" stop-color="#f4f5f7"/><stop offset="0.5" stop-color="#c9ccd1"/><stop offset="1" stop-color="#80868e"/></linearGradient><linearGradient id="ag" x1="0" y1="0" x2="0" y2="1"><stop offset="0" stop-color="#6d97e0"/><stop offset="1" stop-color="#1f4fb0"/></linearGradient></defs><path d="M18 9.5 L37 9.5 L27 20 L27 29.6 L22.3 29.6 L22.3 20 Z" fill="url(#fg)" stroke="#8a9098" stroke-width="0.7"/><text x="15" y="16.7" font-family="Liberation Serif" font-weight="bold" font-size="19" fill="url(#ag)" text-anchor="middle">A</text><text x="13.5" y="31.8" font-family="Liberation Serif" font-weight="bold" font-size="18" fill="#8e3434" text-anchor="middle">Я</text></svg><div class="t" style="left:629.5px;top:85.0px;font-size:12px;line-height:20px;color:#333;transform:scaleX(0.987);transform-origin:0 0;">Сортировка</div><div class="t" style="left:634px;top:97.5px;font-size:12px;line-height:20px;color:#333;transform:scaleX(0.959);transform-origin:0 0;">и фильтр</div><svg class="a" style="left:686px;top:106px;" width="7" height="4" viewBox="0 0 7 4"><path d="M0 0 L7 0 L3.5 3.5 Z" fill="#555"/></svg><svg class="a" style="left:712px;top:54px;" width="31" height="28" viewBox="0 0 31 28"><defs><linearGradient id="bg1" x1="0" y1="0" x2="1" y2="0"><stop offset="0" stop-color="#7d95c4"/><stop offset="0.35" stop-color="#c5d4ee"/><stop offset="1" stop-color="#3d5a92"/></linearGradient></defs><g fill="url(#bg1)" stroke="#4a5f8a" stroke-width="0.6"><rect x="10" y="2" width="4" height="4" rx="1.5"/><rect x="17" y="2" width="4" height="4" rx="1.5"/><rect x="7.5" y="5" width="8" height="4.5" rx="1.5"/><rect x="15.5" y="5" width="8" height="4.5" rx="1.5"/><rect x="5" y="9" width="10.5" height="6" rx="1"/><rect x="15.5" y="9" width="10.5" height="6" rx="1"/><rect x="2" y="14" width="11" height="12" rx="1.5"/><rect x="18" y="14" width="11" height="12" rx="1.5"/></g><rect x="13" y="14" width="5" height="2" fill="#2c3e66"/><rect x="2.3" y="23.5" width="10.4" height="2.3" fill="#22355e"/><rect x="18.3" y="23.5" width="10.4" height="2.3" fill="#22355e"/></svg><div class="t" style="left:709px;top:85.0px;font-size:12px;line-height:20px;color:#333;transform:scaleX(0.949);transform-origin:0 0;">Найти и</div><div class="t" style="left:699px;top:97.5px;font-size:12px;line-height:20px;color:#333;transform:scaleX(0.986);transform-origin:0 0;">выделить</div><svg class="a" style="left:754px;top:106px;" width="7" height="4" viewBox="0 0 7 4"><path d="M0 0 L7 0 L3.5 3.5 Z" fill="#555"/></svg><div class="a" style="left:7px;top:162px;width:854px;height:438px;background:#fff;overflow:hidden"><div class="a" style="left:0px;top:0px;width:900px;height:1px;background:#9fa7b2"></div><div class="a" style="left:0px;top:1px;width:26px;height:19px;background:#dfe3e8"></div><svg class="a" style="left:10px;top:6px" width="12" height="12"><path d="M11 0 L11 11 L0 11 Z" fill="#c3c8ce"/></svg><div class="a" style="left:27px;top:1px;width:159px;height:19px;background:linear-gradient(#ffd25a,#ffe27a)"></div><div class="a" style="left:186px;top:1px;width:1px;height:19px;background:#c5cad3"></div><div class="t" style="left:27px;top:2px;width:159px;text-align:center;font-size:13.6px;line-height:19px;color:#333">A</div><div class="a" style="left:187px;top:1px;width:113px;height:19px;background:#dfe3e8"></div><div class="a" style="left:300px;top:1px;width:1px;height:19px;background:#c5cad3"></div><div class="t" style="left:187px;top:2px;width:113px;text-align:center;font-size:13.6px;line-height:19px;color:#333">B</div><div class="a" style="left:301px;top:1px;width:160px;height:19px;background:#dfe3e8"></div><div class="a" style="left:461px;top:1px;width:1px;height:19px;background:#c5cad3"></div><div class="t" style="left:301px;top:2px;width:160px;text-align:center;font-size:13.6px;line-height:19px;color:#333">C</div><div class="a" style="left:462px;top:1px;width:191px;height:19px;background:#dfe3e8"></div><div class="a" style="left:653px;top:1px;width:1px;height:19px;background:#c5cad3"></div><div class="t" style="left:462px;top:2px;width:191px;text-align:center;font-size:13.6px;line-height:19px;color:#333">D</div><div class="a" style="left:654px;top:1px;width:160px;height:19px;background:#dfe3e8"></div><div class="a" style="left:814px;top:1px;width:1px;height:19px;background:#c5cad3"></div><div class="t" style="left:654px;top:2px;width:160px;text-align:center;font-size:13.6px;line-height:19px;color:#333">E</div><div class="a" style="left:815px;top:1px;width:78px;height:19px;background:#dfe3e8"></div><div class="a" style="left:893px;top:1px;width:1px;height:19px;background:#c5cad3"></div><div class="t" style="left:815px;top:2px;width:78px;text-align:center;font-size:13.6px;line-height:19px;color:#333"> </div><div class="a" style="left:0px;top:20px;width:900px;height:1px;background:#9aa3ad"></div><div class="a" style="left:26px;top:20px;width:161px;height:1px;background:#e3a13a"></div><div class="a" style="left:26px;top:1px;width:1px;height:19px;background:#e3a13a"></div><div class="a" style="left:0px;top:21px;width:26px;height:19px;background:#dfe3e8"></div><div class="a" style="left:0px;top:40px;width:26px;height:1px;background:#c5cad3"></div><div class="t" style="left:0px;top:22px;width:26px;text-align:center;font-size:13.6px;line-height:19px;color:#333">1</div><div class="a" style="left:27px;top:21px;width:827px;height:19px;background:#604a7b"></div><div class="cell" style="left:93.2px;top:22px;color:#fff;font-weight:bold;transform:scaleX(0.954);transform-origin:0 0">Имя</div><div class="cell" style="left:193.6px;top:22px;color:#fff;font-weight:bold;transform:scaleX(0.978);transform-origin:0 0">Дата рождения</div><div class="cell" style="left:369.3px;top:22px;color:#fff;font-weight:bold;transform:scaleX(0.887);transform-origin:0 0">Пол</div><div class="cell" style="left:492.5px;top:22px;color:#fff;font-weight:bold;transform:scaleX(0.900);transform-origin:0 0">Категория персонала</div><div class="a" style="left:27px;top:40px;width:827px;height:1px;background:#000"></div><div class="cell" style="left:828px;top:22px;color:#fff;font-weight:bold;transform:scaleX(0.84);transform-origin:0 0">Сумма</div><div class="a" style="left:0px;top:41px;width:26px;height:19px;background:#ffd55a"></div><div class="a" style="left:0px;top:60px;width:26px;height:1px;background:#c5cad3"></div><div class="t" style="left:0px;top:42px;width:26px;text-align:center;font-size:13.6px;line-height:19px;color:#333">2</div><div class="a" style="left:27px;top:41px;width:273px;height:19px;background:#92d050"></div><div class="cell" style="left:28.4px;top:42px;transform:scaleX(0.996);transform-origin:0 0">Николаев А. Д.</div><div class="cell" style="left:229.4px;top:42px;transform:scaleX(0.935);transform-origin:0 0">1985</div><div class="cell" style="left:301px;top:42px;width:160px;text-align:center">муж.</div><div class="cell" style="left:462px;top:42px;width:191px;text-align:center">Основной персонал</div><div class="cell" style="left:702.2px;top:42px;transform:scaleX(0.935);transform-origin:0 0">25.05.2016</div><div class="cell" style="left:815px;top:42px;width:78px;text-align:center"></div><div class="a" style="left:27px;top:60px;width:827px;height:1px;background:#000"></div><div class="a" style="left:0px;top:61px;width:26px;height:19px;background:#dfe3e8"></div><div class="a" style="left:0px;top:80px;width:26px;height:1px;background:#c5cad3"></div><div class="t" style="left:0px;top:62px;width:26px;text-align:center;font-size:13.6px;line-height:19px;color:#333">3</div><div class="a" style="left:27px;top:61px;width:273px;height:19px;background:#92d050"></div><div class="cell" style="left:28.4px;top:62px;transform:scaleX(0.939);transform-origin:0 0">Сафронова В. М.</div><div class="cell" style="left:229.4px;top:62px;transform:scaleX(0.935);transform-origin:0 0">1973</div><div class="cell" style="left:301px;top:62px;width:160px;text-align:center">жен.</div><div class="cell" style="left:462px;top:62px;width:191px;text-align:center">Основной персонал</div><div class="cell" style="left:702.2px;top:62px;transform:scaleX(0.935);transform-origin:0 0">25.05.2016</div><div class="cell" style="left:815px;top:62px;width:78px;text-align:center"></div><div class="a" style="left:27px;top:80px;width:827px;height:1px;background:#000"></div><div class="a" style="left:0px;top:81px;width:26px;height:19px;background:#dfe3e8"></div><div class="a" style="left:0px;top:100px;width:26px;height:1px;background:#c5cad3"></div><div class="t" style="left:0px;top:82px;width:26px;text-align:center;font-size:13.6px;line-height:19px;color:#333">4</div><div class="a" style="left:27px;top:81px;width:273px;height:19px;background:#92d050"></div><div class="cell" style="left:28.4px;top:82px;transform:scaleX(0.957);transform-origin:0 0">Коваль Л. П.</div><div class="cell" style="left:229.4px;top:82px;transform:scaleX(0.935);transform-origin:0 0">1978</div><div class="cell" style="left:301px;top:82px;width:160px;text-align:center">жен.</div><div class="cell" style="left:462px;top:82px;width:191px;text-align:center">Вспомогательный персонал</div><div class="cell" style="left:702.2px;top:82px;transform:scaleX(0.935);transform-origin:0 0">25.05.2016</div><div class="cell" style="left:815px;top:82px;width:78px;text-align:center"></div><div class="a" style="left:27px;top:100px;width:827px;height:1px;background:#000"></div><div class="a" style="left:0px;top:101px;width:26px;height:19px;background:#dfe3e8"></div><div class="a" style="left:0px;top:120px;width:26px;height:1px;background:#c5cad3"></div><div class="t" style="left:0px;top:102px;width:26px;text-align:center;font-size:13.6px;line-height:19px;color:#333">5</div><div class="a" style="left:27px;top:101px;width:273px;height:19px;background:#92d050"></div><div class="cell" style="left:28.4px;top:102px;transform:scaleX(0.963);transform-origin:0 0">Парфенов Д. Ф.</div><div class="cell" style="left:229.4px;top:102px;transform:scaleX(0.935);transform-origin:0 0">1969</div><div class="cell" style="left:301px;top:102px;width:160px;text-align:center">муж.</div><div class="cell" style="left:462px;top:102px;width:191px;text-align:center">Основной персонал</div><div class="cell" style="left:702.2px;top:102px;transform:scaleX(0.935);transform-origin:0 0">25.05.2016</div><div class="cell" style="left:815px;top:102px;width:78px;text-align:center"></div><div class="a" style="left:27px;top:120px;width:827px;height:1px;background:#000"></div><div class="a" style="left:0px;top:121px;width:26px;height:19px;background:#dfe3e8"></div><div class="a" style="left:0px;top:140px;width:26px;height:1px;background:#c5cad3"></div><div class="t" style="left:0px;top:122px;width:26px;text-align:center;font-size:13.6px;line-height:19px;color:#333">6</div><div class="a" style="left:27px;top:121px;width:273px;height:19px;background:#92d050"></div><div class="cell" style="left:28.4px;top:122px;transform:scaleX(0.972);transform-origin:0 0">Петров Ф. Л.</div><div class="cell" style="left:229.4px;top:122px;transform:scaleX(0.935);transform-origin:0 0">1987</div><div class="cell" style="left:301px;top:122px;width:160px;text-align:center">муж.</div><div class="cell" style="left:462px;top:122px;width:191px;text-align:center">Основной персонал</div><div class="cell" style="left:702.2px;top:122px;transform:scaleX(0.935);transform-origin:0 0">25.05.2016</div><div class="cell" style="left:815px;top:122px;width:78px;text-align:center"></div><div class="a" style="left:27px;top:140px;width:827px;height:1px;background:#000"></div><div class="a" style="left:0px;top:141px;width:26px;height:19px;background:#dfe3e8"></div><div class="a" style="left:0px;top:160px;width:26px;height:1px;background:#c5cad3"></div><div class="t" style="left:0px;top:142px;width:26px;text-align:center;font-size:13.6px;line-height:19px;color:#333">7</div><div class="a" style="left:27px;top:141px;width:273px;height:19px;background:#92d050"></div><div class="cell" style="left:28.4px;top:142px;transform:scaleX(0.986);transform-origin:0 0">Попова М. Д.</div><div class="cell" style="left:229.4px;top:142px;transform:scaleX(0.935);transform-origin:0 0">1981</div><div class="cell" style="left:301px;top:142px;width:160px;text-align:center">жен.</div><div class="cell" style="left:462px;top:142px;width:191px;text-align:center">Вспомогательный персонал</div><div class="cell" style="left:702.2px;top:142px;transform:scaleX(0.935);transform-origin:0 0">25.05.2016</div><div class="cell" style="left:815px;top:142px;width:78px;text-align:center"></div><div class="a" style="left:27px;top:160px;width:827px;height:1px;background:#000"></div><div class="a" style="left:0px;top:161px;width:26px;height:19px;background:#dfe3e8"></div><div class="a" style="left:0px;top:180px;width:26px;height:1px;background:#c5cad3"></div><div class="t" style="left:0px;top:162px;width:26px;text-align:center;font-size:13.6px;line-height:19px;color:#333">8</div><div class="a" style="left:27px;top:161px;width:273px;height:19px;background:#92d050"></div><div class="cell" style="left:28.4px;top:162px;transform:scaleX(0.996);transform-origin:0 0">Николаев А. Д.</div><div class="cell" style="left:229.4px;top:162px;transform:scaleX(0.935);transform-origin:0 0">1985</div><div class="cell" style="left:301px;top:162px;width:160px;text-align:center">муж.</div><div class="cell" style="left:462px;top:162px;width:191px;text-align:center">Основной персонал</div><div class="cell" style="left:702.2px;top:162px;transform:scaleX(0.935);transform-origin:0 0">23.06.2016</div><div class="cell" style="left:815px;top:162px;width:78px;text-align:center"></div><div class="a" style="left:27px;top:180px;width:827px;height:1px;background:#000"></div><div class="a" style="left:0px;top:181px;width:26px;height:19px;background:#dfe3e8"></div><div class="a" style="left:0px;top:200px;width:26px;height:1px;background:#c5cad3"></div><div class="t" style="left:0px;top:182px;width:26px;text-align:center;font-size:13.6px;line-height:19px;color:#333">9</div><div class="a" style="left:27px;top:181px;width:273px;height:19px;background:#92d050"></div><div class="cell" style="left:28.4px;top:182px;transform:scaleX(0.939);transform-origin:0 0">Сафронова В. М.</div><div class="cell" style="left:229.4px;top:182px;transform:scaleX(0.935);transform-origin:0 0">1973</div><div class="cell" style="left:301px;top:182px;width:160px;text-align:center">жен.</div><div class="cell" style="left:462px;top:182px;width:191px;text-align:center">Основной персонал</div><div class="cell" style="left:702.2px;top:182px;transform:scaleX(0.935);transform-origin:0 0">23.06.2016</div><div class="cell" style="left:815px;top:182px;width:78px;text-align:center"></div><div class="a" style="left:27px;top:200px;width:827px;height:1px;background:#000"></div><div class="a" style="left:0px;top:201px;width:26px;height:19px;background:#dfe3e8"></div><div class="a" style="left:0px;top:220px;width:26px;height:1px;background:#c5cad3"></div><div class="t" style="left:0px;top:202px;width:26px;text-align:center;font-size:13.6px;line-height:19px;color:#333">10</div><div class="a" style="left:27px;top:201px;width:273px;height:19px;background:#92d050"></div><div class="cell" style="left:28.4px;top:202px;transform:scaleX(0.957);transform-origin:0 0">Коваль Л. П.</div><div class="cell" style="left:229.4px;top:202px;transform:scaleX(0.935);transform-origin:0 0">1978</div><div class="cell" style="left:301px;top:202px;width:160px;text-align:center">жен.</div><div class="cell" style="left:462px;top:202px;width:191px;text-align:center">Вспомогательный персонал</div><div class="cell" style="left:702.2px;top:202px;transform:scaleX(0.935);transform-origin:0 0">23.06.2016</div><div class="cell" style="left:815px;top:202px;width:78px;text-align:center"></div><div class="a" style="left:27px;top:220px;width:827px;height:1px;background:#000"></div><div class="a" style="left:0px;top:221px;width:26px;height:19px;background:#dfe3e8"></div><div class="a" style="left:0px;top:240px;width:26px;height:1px;background:#c5cad3"></div><div class="t" style="left:0px;top:222px;width:26px;text-align:center;font-size:13.6px;line-height:19px;color:#333">11</div><div class="a" style="left:27px;top:221px;width:273px;height:19px;background:#92d050"></div><div class="cell" style="left:28.4px;top:222px;transform:scaleX(0.963);transform-origin:0 0">Парфенов Д. Ф.</div><div class="cell" style="left:229.4px;top:222px;transform:scaleX(0.935);transform-origin:0 0">1969</div><div class="cell" style="left:301px;top:222px;width:160px;text-align:center">муж.</div><div class="cell" style="left:462px;top:222px;width:191px;text-align:center">Основной персонал</div><div class="cell" style="left:702.2px;top:222px;transform:scaleX(0.935);transform-origin:0 0">23.06.2016</div><div class="cell" style="left:815px;top:222px;width:78px;text-align:center"></div><div class="a" style="left:27px;top:240px;width:827px;height:1px;background:#000"></div><div class="a" style="left:0px;top:241px;width:26px;height:19px;background:#dfe3e8"></div><div class="a" style="left:0px;top:260px;width:26px;height:1px;background:#c5cad3"></div><div class="t" style="left:0px;top:242px;width:26px;text-align:center;font-size:13.6px;line-height:19px;color:#333">12</div><div class="a" style="left:27px;top:241px;width:273px;height:19px;background:#92d050"></div><div class="cell" style="left:28.4px;top:242px;transform:scaleX(0.972);transform-origin:0 0">Петров Ф. Л.</div><div class="cell" style="left:229.4px;top:242px;transform:scaleX(0.935);transform-origin:0 0">1987</div><div class="cell" style="left:301px;top:242px;width:160px;text-align:center">муж.</div><div class="cell" style="left:462px;top:242px;width:191px;text-align:center">Основной персонал</div><div class="cell" style="left:702.2px;top:242px;transform:scaleX(0.935);transform-origin:0 0">23.06.2016</div><div class="cell" style="left:815px;top:242px;width:78px;text-align:center"></div><div class="a" style="left:27px;top:260px;width:827px;height:1px;background:#000"></div><div class="a" style="left:0px;top:261px;width:26px;height:19px;background:#dfe3e8"></div><div class="a" style="left:0px;top:280px;width:26px;height:1px;background:#c5cad3"></div><div class="t" style="left:0px;top:262px;width:26px;text-align:center;font-size:13.6px;line-height:19px;color:#333">13</div><div class="a" style="left:27px;top:261px;width:273px;height:19px;background:#92d050"></div><div class="cell" style="left:28.4px;top:262px;transform:scaleX(0.986);transform-origin:0 0">Попова М. Д.</div><div class="cell" style="left:229.4px;top:262px;transform:scaleX(0.935);transform-origin:0 0">1981</div><div class="cell" style="left:301px;top:262px;width:160px;text-align:center">жен.</div><div class="cell" style="left:462px;top:262px;width:191px;text-align:center">Вспомогательный персонал</div><div class="cell" style="left:702.2px;top:262px;transform:scaleX(0.935);transform-origin:0 0">23.06.2016</div><div class="cell" style="left:815px;top:262px;width:78px;text-align:center"></div><div class="a" style="left:27px;top:280px;width:827px;height:1px;background:#000"></div><div class="a" style="left:0px;top:281px;width:26px;height:19px;background:#dfe3e8"></div><div class="a" style="left:0px;top:300px;width:26px;height:1px;background:#c5cad3"></div><div class="t" style="left:0px;top:282px;width:26px;text-align:center;font-size:13.6px;line-height:19px;color:#333">14</div><div class="a" style="left:27px;top:281px;width:273px;height:19px;background:#92d050"></div><div class="cell" style="left:28.4px;top:282px;transform:scaleX(0.996);transform-origin:0 0">Николаев А. Д.</div><div class="cell" style="left:229.4px;top:282px;transform:scaleX(0.935);transform-origin:0 0">1985</div><div class="cell" style="left:301px;top:282px;width:160px;text-align:center">муж.</div><div class="cell" style="left:462px;top:282px;width:191px;text-align:center">Основной персонал</div><div class="cell" style="left:702.2px;top:282px;transform:scaleX(0.935);transform-origin:0 0">25.07.2016</div><div class="cell" style="left:815px;top:282px;width:78px;text-align:center"></div><div class="a" style="left:27px;top:300px;width:827px;height:1px;background:#000"></div><div class="a" style="left:0px;top:301px;width:26px;height:19px;background:#dfe3e8"></div><div class="a" style="left:0px;top:320px;width:26px;height:1px;background:#c5cad3"></div><div class="t" style="left:0px;top:302px;width:26px;text-align:center;font-size:13.6px;line-height:19px;color:#333">15</div><div class="a" style="left:27px;top:301px;width:273px;height:19px;background:#92d050"></div><div class="cell" style="left:28.4px;top:302px;transform:scaleX(0.939);transform-origin:0 0">Сафронова В. М.</div><div class="cell" style="left:229.4px;top:302px;transform:scaleX(0.935);transform-origin:0 0">1973</div><div class="cell" style="left:301px;top:302px;width:160px;text-align:center">жен.</div><div class="cell" style="left:462px;top:302px;width:191px;text-align:center">Основной персонал</div><div class="cell" style="left:702.2px;top:302px;transform:scaleX(0.935);transform-origin:0 0">25.07.2016</div><div class="cell" style="left:815px;top:302px;width:78px;text-align:center"></div><div class="a" style="left:27px;top:320px;width:827px;height:1px;background:#000"></div><div class="a" style="left:0px;top:321px;width:26px;height:19px;background:#dfe3e8"></div><div class="a" style="left:0px;top:340px;width:26px;height:1px;background:#c5cad3"></div><div class="t" style="left:0px;top:322px;width:26px;text-align:center;font-size:13.6px;line-height:19px;color:#333">16</div><div class="a" style="left:27px;top:321px;width:273px;height:19px;background:#92d050"></div><div class="cell" style="left:28.4px;top:322px;transform:scaleX(0.957);transform-origin:0 0">Коваль Л. П.</div><div class="cell" style="left:229.4px;top:322px;transform:scaleX(0.935);transform-origin:0 0">1978</div><div class="cell" style="left:301px;top:322px;width:160px;text-align:center">жен.</div><div class="cell" style="left:462px;top:322px;width:191px;text-align:center">Вспомогательный персонал</div><div class="cell" style="left:702.2px;top:322px;transform:scaleX(0.935);transform-origin:0 0">25.07.2016</div><div class="cell" style="left:815px;top:322px;width:78px;text-align:center"></div><div class="a" style="left:27px;top:340px;width:827px;height:1px;background:#000"></div><div class="a" style="left:0px;top:341px;width:26px;height:19px;background:#dfe3e8"></div><div class="a" style="left:0px;top:360px;width:26px;height:1px;background:#c5cad3"></div><div class="t" style="left:0px;top:342px;width:26px;text-align:center;font-size:13.6px;line-height:19px;color:#333">17</div><div class="a" style="left:27px;top:341px;width:273px;height:19px;background:#92d050"></div><div class="cell" style="left:28.4px;top:342px;transform:scaleX(0.963);transform-origin:0 0">Парфенов Д. Ф.</div><div class="cell" style="left:229.4px;top:342px;transform:scaleX(0.935);transform-origin:0 0">1969</div><div class="cell" style="left:301px;top:342px;width:160px;text-align:center">муж.</div><div class="cell" style="left:462px;top:342px;width:191px;text-align:center">Основной персонал</div><div class="cell" style="left:702.2px;top:342px;transform:scaleX(0.935);transform-origin:0 0">25.07.2016</div><div class="cell" style="left:815px;top:342px;width:78px;text-align:center"></div><div class="a" style="left:27px;top:360px;width:827px;height:1px;background:#000"></div><div class="a" style="left:0px;top:361px;width:26px;height:19px;background:#dfe3e8"></div><div class="a" style="left:0px;top:380px;width:26px;height:1px;background:#c5cad3"></div><div class="t" style="left:0px;top:362px;width:26px;text-align:center;font-size:13.6px;line-height:19px;color:#333">18</div><div class="a" style="left:27px;top:361px;width:273px;height:19px;background:#92d050"></div><div class="cell" style="left:28.4px;top:362px;transform:scaleX(0.972);transform-origin:0 0">Петров Ф. Л.</div><div class="cell" style="left:229.4px;top:362px;transform:scaleX(0.935);transform-origin:0 0">1987</div><div class="cell" style="left:301px;top:362px;width:160px;text-align:center">муж.</div><div class="cell" style="left:462px;top:362px;width:191px;text-align:center">Основной персонал</div><div class="cell" style="left:702.2px;top:362px;transform:scaleX(0.935);transform-origin:0 0">25.07.2016</div><div class="cell" style="left:815px;top:362px;width:78px;text-align:center"></div><div class="a" style="left:27px;top:380px;width:827px;height:1px;background:#000"></div><div class="a" style="left:0px;top:381px;width:26px;height:19px;background:#dfe3e8"></div><div class="a" style="left:0px;top:400px;width:26px;height:1px;background:#c5cad3"></div><div class="t" style="left:0px;top:382px;width:26px;text-align:center;font-size:13.6px;line-height:19px;color:#333">19</div><div class="a" style="left:27px;top:381px;width:273px;height:19px;background:#92d050"></div><div class="cell" style="left:28.4px;top:382px;transform:scaleX(0.986);transform-origin:0 0">Попова М. Д.</div><div class="cell" style="left:229.4px;top:382px;transform:scaleX(0.935);transform-origin:0 0">1981</div><div class="cell" style="left:301px;top:382px;width:160px;text-align:center">жен.</div><div class="cell" style="left:462px;top:382px;width:191px;text-align:center">Вспомогательный персонал</div><div class="cell" style="left:702.2px;top:382px;transform:scaleX(0.935);transform-origin:0 0">25.07.2016</div><div class="cell" style="left:815px;top:382px;width:78px;text-align:center"></div><div class="a" style="left:27px;top:400px;width:827px;height:1px;background:#000"></div><div class="a" style="left:0px;top:401px;width:26px;height:19px;background:#dfe3e8"></div><div class="a" style="left:0px;top:420px;width:26px;height:1px;background:#c5cad3"></div><div class="t" style="left:0px;top:402px;width:26px;text-align:center;font-size:13.6px;line-height:19px;color:#333">20</div><div class="a" style="left:27px;top:401px;width:273px;height:19px;background:#92d050"></div><div class="cell" style="left:28.4px;top:402px;transform:scaleX(0.996);transform-origin:0 0">Николаев А. Д.</div><div class="cell" style="left:229.4px;top:402px;transform:scaleX(0.935);transform-origin:0 0">1985</div><div class="cell" style="left:301px;top:402px;width:160px;text-align:center">муж.</div><div class="cell" style="left:462px;top:402px;width:191px;text-align:center">Основной персонал</div><div class="cell" style="left:702.2px;top:402px;transform:scaleX(0.935);transform-origin:0 0">24.08.2016</div><div class="cell" style="left:815px;top:402px;width:78px;text-align:center"></div><div class="a" style="left:27px;top:420px;width:827px;height:1px;background:#000"></div><div class="a" style="left:0px;top:421px;width:26px;height:19px;background:#dfe3e8"></div><div class="a" style="left:0px;top:440px;width:26px;height:1px;background:#c5cad3"></div><div class="t" style="left:0px;top:422px;width:26px;text-align:center;font-size:13.6px;line-height:19px;color:#333">21</div><div class="a" style="left:27px;top:421px;width:273px;height:19px;background:#92d050"></div><div class="cell" style="left:28.4px;top:422px;transform:scaleX(0.939);transform-origin:0 0">Сафронова В. М.</div><div class="cell" style="left:229.4px;top:422px;transform:scaleX(0.935);transform-origin:0 0">1973</div><div class="cell" style="left:301px;top:422px;width:160px;text-align:center">жен.</div><div class="cell" style="left:462px;top:422px;width:191px;text-align:center">Основной персонал</div><div class="cell" style="left:702.2px;top:422px;transform:scaleX(0.935);transform-origin:0 0">24.08.2016</div><div class="cell" style="left:815px;top:422px;width:78px;text-align:center"></div><div class="a" style="left:27px;top:440px;width:827px;height:1px;background:#000"></div><div class="a" style="left:186px;top:21px;width:1px;height:420px;background:#000"></div><div class="a" style="left:300px;top:21px;width:1px;height:420px;background:#000"></div><div class="a" style="left:461px;top:21px;width:1px;height:420px;background:#000"></div><div class="a" style="left:653px;top:21px;width:1px;height:420px;background:#000"></div><div class="a" style="left:814px;top:21px;width:1px;height:420px;background:#000"></div><div class="a" style="left:26px;top:21px;width:1px;height:420px;background:#c5cad3"></div><div class="a" style="left:26px;top:41px;width:1px;height:19px;background:#e3a13a"></div><div class="a" style="left:0px;top:40px;width:26px;height:1px;background:#e3a13a"></div><div class="a" style="left:0px;top:60px;width:26px;height:1px;background:#e3a13a"></div><div class="a" style="left:26px;top:39px;width:162px;height:1px;background:#7030a0"></div><div class="a" style="left:26px;top:40px;width:162px;height:1px;background:#fff"></div><div class="a" style="left:27px;top:41px;width:160px;height:1px;background:#7030a0"></div><div class="a" style="left:27px;top:41px;width:1px;height:19px;background:#7030a0"></div><div class="a" style="left:185px;top:41px;width:1px;height:19px;background:#7030a0"></div><div class="a" style="left:186px;top:40px;width:1px;height:21px;background:#fff"></div><div class="a" style="left:187px;top:40px;width:1px;height:21px;background:#7030a0"></div><div class="a" style="left:27px;top:59px;width:159px;height:1px;background:#7030a0"></div><div class="a" style="left:26px;top:60px;width:160px;height:1px;background:#fff"></div><div class="a" style="left:26px;top:61px;width:160px;height:1px;background:#7030a0"></div><div class="a" style="left:184px;top:58px;width:5px;height:5px;background:#7030a0"></div><div class="a" style="left:186px;top:58px;width:1px;height:5px;background:#fff"></div><div class="a" style="left:184px;top:60px;width:5px;height:1px;background:#fff"></div></div><div class="a" style="left:7px;top:600px;width:871px;height:15px;background:linear-gradient(#dfe4ea,#e9edf2)"></div><div class="a" style="left:7px;top:614px;width:871px;height:1px;background:#a0a9b4"></div><svg class="a" style="left:12px;top:602px;" width="54" height="10" viewBox="0 0 54 10"><rect x="1" y="1" width="1.6" height="8" fill="#3c4046"/><path d="M8 1 L3 5 L8 9 Z" fill="#3c4046"/><path d="M22 1 L17 5 L22 9 Z" fill="#3c4046"/><path d="M31 1 L36 5 L31 9 Z" fill="#3c4046"/><path d="M45 1 L50 5 L45 9 Z" fill="#3c4046"/><rect x="50.4" y="1" width="1.6" height="8" fill="#3c4046"/></svg><div class="a" style="left:69px;top:600px;width:1px;height:14px;background:#c3cad3"></div><div class="a" style="left:70px;top:600px;width:450px;height:14px;background:linear-gradient(#e6eaef,#dfe4ea)"></div><div class="a" style="left:70px;top:600px;width:450px;height:1px;background:#a0a9b4"></div><svg class="a" style="left:70px;top:600px;" width="460" height="15" viewBox="0 0 460 15"><defs><linearGradient id="tg" x1="0" y1="0" x2="0" y2="1"><stop offset="0" stop-color="#f3f5f8"/><stop offset="1" stop-color="#dde2e8"/></linearGradient></defs><path d="M6 14 L19 0.5 L87 0.5 L87 14 Z" fill="url(#tg)"/><path d="M6.5 13.5 L19.5 0.5" stroke="#98a1ac" fill="none"/><path d="M7.5 14 L20 1.5" stroke="#fff" opacity="0.7" fill="none"/><path d="M59 14 L72 0.5 L140 0.5 L140 14 Z" fill="url(#tg)"/><path d="M59.5 13.5 L72.5 0.5" stroke="#98a1ac" fill="none"/><path d="M60.5 14 L73 1.5" stroke="#fff" opacity="0.7" fill="none"/><path d="M112 14 L125 0.5 L193 0.5 L193 14 Z" fill="url(#tg)"/><path d="M112.5 13.5 L125.5 0.5" stroke="#98a1ac" fill="none"/><path d="M113.5 14 L126 1.5" stroke="#fff" opacity="0.7" fill="none"/><path d="M165 14 L178 0.5 L247 0.5 L247 14 Z" fill="url(#tg)"/><path d="M165.5 13.5 L178.5 0.5" stroke="#98a1ac" fill="none"/><path d="M166.5 14 L179 1.5" stroke="#fff" opacity="0.7" fill="none"/><path d="M219 14 L232 0.5 L308 0.5 L308 14 Z" fill="url(#tg)"/><path d="M219.5 13.5 L232.5 0.5" stroke="#98a1ac" fill="none"/><path d="M220.5 14 L233 1.5" stroke="#fff" opacity="0.7" fill="none"/><path d="M343.5 0 L343.5 12 L340 14" stroke="#98a1ac" fill="none"/><path d="M280 14 L293 0.5 L357 0.5 L357 14 Z" fill="url(#tg)"/><path d="M280.5 13.5 L293.5 0.5" stroke="#98a1ac" fill="none"/><path d="M281.5 14 L294 1.5" stroke="#fff" opacity="0.7" fill="none"/><rect x="343" y="0" width="64" height="13.5" fill="#fff"/><path d="M343.5 0 L343.5 12.5 L340 14" stroke="#98a1ac" fill="none"/><path d="M392.6 14 L405.6 0.5 L463 0.5 L463 14 Z" fill="url(#tg)"/><path d="M393.1 13.5 L406.1 0.5" stroke="#98a1ac" fill="none"/><path d="M394.1 14 L406.6 1.5" stroke="#fff" opacity="0.7" fill="none"/></svg><div class="t" style="left:90px;top:597.0px;font-size:12px;line-height:20px;color:#555;transform:scaleX(1.008);transform-origin:0 0;">Лист7</div><div class="t" style="left:143px;top:597.0px;font-size:12px;line-height:20px;color:#555;transform:scaleX(1.038);transform-origin:0 0;">Лист5</div><div class="t" style="left:196px;top:597.0px;font-size:12px;line-height:20px;color:#555;transform:scaleX(1.038);transform-origin:0 0;">Лист8</div><div class="t" style="left:249px;top:597.0px;font-size:12px;line-height:20px;color:#555;transform:scaleX(1.038);transform-origin:0 0;">Лист9</div><div class="t" style="left:303px;top:597.0px;font-size:12px;line-height:20px;color:#555;transform:scaleX(1.027);transform-origin:0 0;">Лист10</div><div class="t" style="left:364px;top:597.0px;font-size:12px;line-height:20px;color:#555;transform:scaleX(1.038);transform-origin:0 0;">Лист11</div><div class="t" style="left:476.6px;top:597.0px;font-size:12px;line-height:20px;color:#555;transform:scaleX(1.029);transform-origin:0 0;">Лист2</div><div class="t" style="left:423.5px;top:597.0px;font-size:12px;line-height:20px;color:#333;font-weight:bold;transform:scaleX(1.014);transform-origin:0 0;">Лист1</div><div class="a" style="left:519px;top:601px;width:8px;height:13px;background:#fff;border:1px solid #8e97a3"></div><div class="a" style="left:522px;top:603px;width:1px;height:9px;background:#777"></div><div class="a" style="left:527px;top:600px;width:334px;height:14px;background:#e3e7ec"></div><svg class="a" style="left:533px;top:603px;" width="6" height="9" viewBox="0 0 6 9"><path d="M5.5 0 L0.5 4.5 L5.5 9 Z" fill="#3c4046"/></svg><div class="a" style="left:544px;top:601px;width:204px;height:13px;border:1px solid #a8b0ba;border-radius:2px;background:linear-gradient(#fbfcfd,#e6eaef)"></div><svg class="a" style="left:641px;top:604px;" width="8" height="7" viewBox="0 0 8 7"><path d="M0.5 0v7M2.5 0v7M4.5 0v7M6.5 0v7" stroke="#777"/></svg><svg class="a" style="left:842px;top:603px;" width="6" height="9" viewBox="0 0 6 9"><path d="M0.5 0 L5.5 4.5 L0.5 9 Z" fill="#3c4046"/></svg><div class="a" style="left:852px;top:601px;width:8px;height:13px;background:#fff;border:1px solid #8e97a3"></div><div class="a" style="left:855px;top:603px;width:1px;height:9px;background:#777"></div><div class="a" style="left:861px;top:162px;width:16px;height:438px;background:#dfe3e8;border-left:1px solid #c7ccd3"></div><div class="a" style="left:863px;top:163px;width:13px;height:8px;background:#fff;border:1px solid #8e97a3"></div><div class="a" style="left:866px;top:166px;width:7px;height:1px;background:#777"></div><svg class="a" style="left:864px;top:176px;" width="10" height="6" viewBox="0 0 10 6"><path d="M0 5.5 L5 0.5 L10 5.5 Z" fill="#3c4046"/></svg><div class="a" style="left:862px;top:188px;width:14px;height:186px;border:1px solid #a8b0ba;border-radius:2px;background:linear-gradient(90deg,#fbfcfd,#e6eaef)"></div><svg class="a" style="left:865px;top:278px;" width="8" height="7" viewBox="0 0 8 7"><path d="M0 0.5h8M0 2.5h8M0 4.5h8" stroke="#777"/></svg><svg class="a" style="left:864px;top:588px;" width="10" height="6" viewBox="0 0 10 6"><path d="M0 0.5 L10 0.5 L5 5.5 Z" fill="#3c4046"/></svg><div class="a" style="left:7px;top:615px;width:871px;height:23px;background:linear-gradient(#eef1f4,#dde2e8 60%,#d4d9df);border-top:1px solid #c8ced6;border-bottom:1px solid #8a949f"></div><div class="t" style="left:15.3px;top:616.0px;font-size:12px;line-height:20px;color:#333;transform:scaleX(0.958);transform-origin:0 0;">Готово</div><div class="a" style="left:61px;top:617px;width:1px;height:18px;background:#b9c0c8"></div><div class="a" style="left:62px;top:617px;width:1px;height:18px;background:#fff"></div><svg class="a" style="left:70px;top:618px;" width="17" height="15" viewBox="0 0 17 15"><rect x="2.5" y="2.5" width="14" height="12" fill="#fff" stroke="#2f5fae"/><rect x="3" y="3" width="13" height="2.5" fill="#3a76d8"/><path d="M5 8h3M10 8h5M5 10.5h3M10 10.5h5M5 13h3M10 13h5" stroke="#6d94d0"/><circle cx="4" cy="3.5" r="3" fill="#e04a2a"/></svg><div class="a" style="left:96px;top:617px;width:1px;height:18px;background:#b9c0c8"></div><div class="a" style="left:97px;top:617px;width:1px;height:18px;background:#fff"></div><div class="a" style="left:624px;top:617px;width:1px;height:18px;background:#b9c0c8"></div><div class="a" style="left:626px;top:617px;width:18px;height:18px;border:1px solid #e3b545;border-radius:2px;background:linear-gradient(#fde9a3,#fbd66a)"></div><svg class="a" style="left:628px;top:621px;" width="13" height="10" viewBox="0 0 13 10"><rect x="0" y="0" width="13" height="10" fill="#4f5560"/><rect x="1" y="1" width="3" height="2" fill="#fff"/><rect x="1" y="4" width="3" height="2" fill="#fff"/><rect x="1" y="7" width="3" height="2" fill="#fff"/><rect x="5" y="1" width="3" height="2" fill="#fff"/><rect x="5" y="4" width="3" height="2" fill="#fff"/><rect x="5" y="7" width="3" height="2" fill="#fff"/><rect x="9" y="1" width="3" height="2" fill="#fff"/><rect x="9" y="4" width="3" height="2" fill="#fff"/><rect x="9" y="7" width="3" height="2" fill="#fff"/></svg><svg class="a" style="left:646px;top:620px;" width="14" height="12" viewBox="0 0 14 12"><rect x="0.5" y="0.5" width="13" height="11" fill="#b4bac2" stroke="#6f757d"/><rect x="3" y="2.5" width="8" height="7" fill="#f4f5f7" stroke="#7a8088" stroke-width="0.8"/><path d="M4.5 4.5h5M4.5 6h5M4.5 7.5h5" stroke="#aab" stroke-width="0.6"/></svg><svg class="a" style="left:665px;top:620px;" width="14" height="12" viewBox="0 0 14 12"><rect x="0.5" y="0.5" width="13" height="11" fill="#b4bac2" stroke="#6f757d"/><rect x="1.5" y="1" width="3" height="6.5" fill="#fff"/><rect x="5.5" y="1" width="3" height="6.5" fill="#fff"/><path d="M8.8 1v7.5H1" stroke="#6f757d" stroke-width="0.8" fill="none"/></svg><div class="t" style="left:690px;top:616.0px;font-size:12px;line-height:20px;color:#333;transform:scaleX(0.880);transform-origin:0 0;">100%</div><svg class="a" style="left:726px;top:618px;" width="16" height="16" viewBox="0 0 16 16"><circle cx="8" cy="8" r="7.3" fill="url(#zg)" stroke="#7a8592"/><defs><linearGradient id="zg" x1="0" y1="0" x2="0" y2="1"><stop offset="0" stop-color="#fff"/><stop offset="1" stop-color="#d9dee4"/></linearGradient></defs><rect x="4" y="7" width="8" height="2" fill="#4a4f57"/></svg><div class="a" style="left:742px;top:626px;width:100px;height:1px;background:#a0a8b2"></div><div class="a" style="left:742px;top:627px;width:100px;height:1px;background:#fff"></div><svg class="a" style="left:787px;top:618px;" width="10" height="15" viewBox="0 0 10 15"><path d="M0.5 0.5 L9.5 0.5 L9.5 10 L5 14 L0.5 10 Z" fill="#f4f6f8" stroke="#6d7782"/></svg><svg class="a" style="left:842px;top:618px;" width="16" height="16" viewBox="0 0 16 16"><circle cx="8" cy="8" r="7.3" fill="url(#zg)" stroke="#7a8592"/><rect x="4" y="7" width="8" height="2" fill="#4a4f57"/><rect x="7" y="4" width="2" height="8" fill="#4a4f57"/></svg><svg class="a" style="left:865px;top:624px;" width="11" height="11" viewBox="0 0 11 11"><g fill="#a3abb5"><rect x="8" y="0" width="2" height="2"/><rect x="5" y="3" width="2" height="2"/><rect x="8" y="3" width="2" height="2"/><rect x="2" y="6" width="2" height="2"/><rect x="5" y="6" width="2" height="2"/><rect x="8" y="6" width="2" height="2"/></g></svg><div class="a" style="left:6px;top:134px;width:1px;height:504px;background:#76808c"></div><div class="a" style="left:877px;top:134px;width:1px;height:504px;background:#76808c"></div><div class="a" style="left:630px;top:119px;width:218px;height:140px;background:rgba(60,40,90,0.13);border-radius:4px;filter:blur(1.5px)"></div><div class="a" style="left:628px;top:116px;width:217px;height:140px;background:#fff;border:1px solid #c5c9cf;border-radius:2px"></div><div class="a" style="left:654px;top:117px;width:1px;height:138px;background:#e2e4e7"></div><div class="t" style="left:663.5px;top:119.0px;font-size:11px;line-height:20px;color:#262838;transform:scaleX(1.037);transform-origin:0 0;">Сортировка от А до Я</div><div class="a" style="left:746px;top:134px;width:7px;height:1px;background:#262838"></div><div class="t" style="left:663.5px;top:141.0px;font-size:11px;line-height:20px;color:#262838;transform:scaleX(1.037);transform-origin:0 0;">Сортировка от Я до А</div><div class="a" style="left:746px;top:156px;width:7px;height:1px;background:#262838"></div><div class="t" style="left:663.5px;top:163.0px;font-size:11px;line-height:20px;color:#262838;transform:scaleX(1.037);transform-origin:0 0;">Настраиваемая сортировка...</div><div class="a" style="left:663.5px;top:178px;width:8px;height:1px;background:#262838"></div><div class="a" style="left:662px;top:185px;width:181px;height:1px;border-top:1px dashed #c5c5c5"></div><div class="t" style="left:663px;top:189.6px;font-size:11px;line-height:20px;color:#262838;transform:scaleX(1.001);transform-origin:0 0;">Фильтр</div><div class="a" style="left:663px;top:205px;width:8px;height:1px;background:#262838"></div><div class="t" style="left:663px;top:211.4px;font-size:11px;line-height:20px;color:#a8a8a8;transform:scaleX(1.057);transform-origin:0 0;">Очистить</div><div class="a" style="left:672px;top:227px;width:7px;height:1px;background:#a8a8a8"></div><div class="t" style="left:663px;top:233.2px;font-size:11px;line-height:20px;color:#a8a8a8;transform:scaleX(1.075);transform-origin:0 0;">Повторить</div><div class="a" style="left:663px;top:249px;width:8px;height:1px;background:#a8a8a8"></div><div class="t" style="left:636px;top:121px;font-family:'Liberation Serif',serif;font-weight:bold;font-size:10px;line-height:9px;color:#2a4f9c">A</div><div class="t" style="left:636px;top:129px;font-family:'Liberation Serif',serif;font-weight:bold;font-size:10px;line-height:9px;color:#9a4a44">Я</div><svg class="a" style="left:645px;top:121px;" width="6" height="17" viewBox="0 0 6 17"><path d="M3 0.5 L3 15" stroke="#111" stroke-width="1.2"/><path d="M0.5 11 L3 15.5 L5.5 11" fill="none" stroke="#111" stroke-width="1.2"/></svg><div class="t" style="left:636px;top:143px;font-family:'Liberation Serif',serif;font-weight:bold;font-size:10px;line-height:9px;color:#9a4a44">Я</div><div class="t" style="left:636px;top:151px;font-family:'Liberation Serif',serif;font-weight:bold;font-size:10px;line-height:9px;color:#2a4f9c">A</div><svg class="a" style="left:645px;top:143px;" width="6" height="17" viewBox="0 0 6 17"><path d="M3 0.5 L3 15" stroke="#111" stroke-width="1.2"/><path d="M0.5 11 L3 15.5 L5.5 11" fill="none" stroke="#111" stroke-width="1.2"/></svg><svg class="a" style="left:635px;top:166px;" width="15" height="14" viewBox="0 0 15 14"><rect x="0.5" y="0.5" width="14" height="13" fill="#f4f7fb" stroke="#9fb3cc"/><path d="M4.5 2 L4.5 11 M2 8.5 L4.5 11.5 L7 8.5" stroke="#2a5bd0" stroke-width="1.5" fill="none"/><path d="M10.5 12 L10.5 3 M8 5.5 L10.5 2.5 L13 5.5" stroke="#d04a2a" stroke-width="1.5" fill="none"/></svg><svg class="a" style="left:635px;top:194px;" width="16" height="11" viewBox="0 0 16 11"><path d="M0.5 0.5 L10.5 0.5 L6.5 5 L6.5 10.5 L4.5 9.5 L4.5 5 Z" fill="#222"/><path d="M2 1.5 L8 1.5 L5.5 4" fill="#999"/><rect x="11" y="3" width="5" height="1.8" fill="#111"/><rect x="11" y="7" width="5" height="1.8" fill="#111"/></svg><svg class="a" style="left:635px;top:214px;" width="16" height="14" viewBox="0 0 16 14"><path d="M0.5 0.5 L10.5 0.5 L6.5 5 L6.5 12.5 L4.5 11.5 L4.5 5 Z" fill="#c4c8cd"/><path d="M9 4 L9 13 M9 8.5 L14 4 M9.5 8.5 L14 13" stroke="#a9aeb5" stroke-width="1.8"/></svg><svg class="a" style="left:635px;top:235px;" width="16" height="16" viewBox="0 0 16 16"><path d="M0.5 0.5 L10.5 0.5 L6.5 5 L6.5 11 L4.5 10 L4.5 5 Z" fill="#c4c8cd"/><path d="M8 9 C10 6 14 7 14 10 M8 13 C10 16 14 15 14 12" stroke="#a9aeb5" stroke-width="1.8" fill="none"/></svg><div class="a" style="left:621px;top:44px;width:90.5px;height:74px;border:5px solid #e8141c;border-radius:13px 15px 12px 14px"></div><div class="a" style="left:628px;top:136px;width:168px;height:30.5px;border:5px solid #e8141c;border-radius:10px 9px 9px 12px"></div>
</body></html>
